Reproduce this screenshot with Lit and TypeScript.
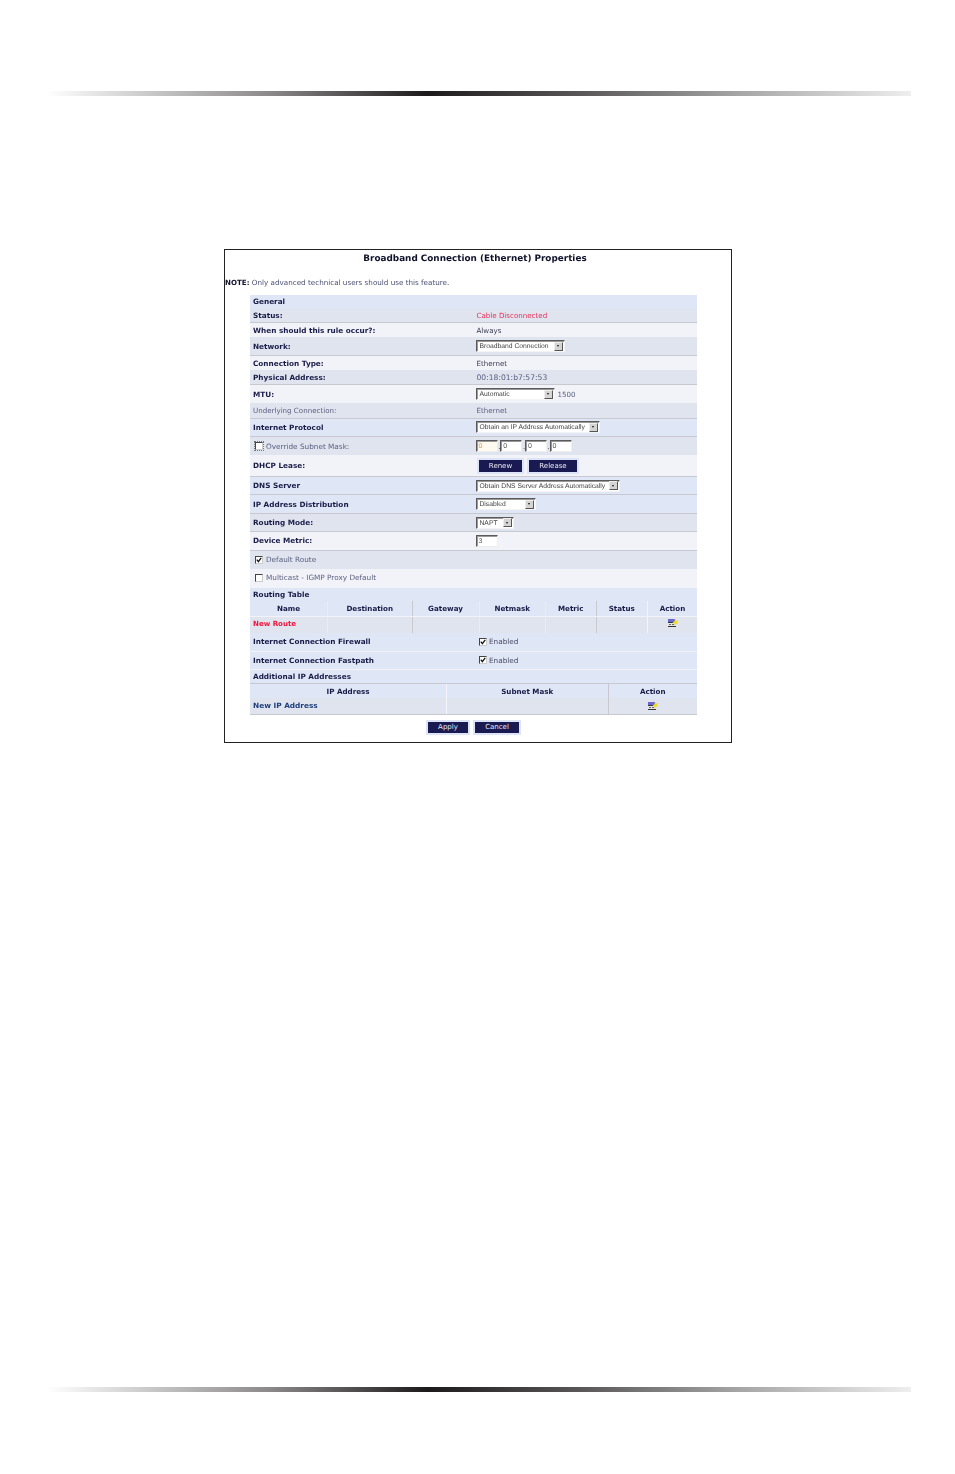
import { LitElement, html, css } from "lit";
import { customElement } from "lit/decorators.js";

const ICON = html`<svg class="icon" viewBox="0 0 10 8" width="10" height="8">
  <rect x="0" y="0" width="7" height="3" fill="#6a68d0"/>
  <rect x="0" y="3" width="8" height="1" fill="#333"/>
  <rect x="0" y="4" width="8" height="3" fill="#e4e5ec"/>
  <rect x="1" y="5" width="2" height="1" fill="#666"/>
  <rect x="4" y="5" width="2" height="1" fill="#666"/>
  <rect x="0" y="7" width="8" height="1" fill="#333"/>
  <path d="M7 0 L8 1.6 L10 1 L9 3 L10 5 L8 4.6 L7 7 L6.2 4.6 L4.5 3.4 L6.4 2.4 Z" fill="#f0df20"/>
</svg>`;

const sel = (text: string, cls: string) =>
  html`<span class="sel ${cls}"><span class="sel-t">${text}</span><span class="arrow"><i></i></span></span>`;
const cb = (checked: boolean, cls = "") => html`<span class="cb ${cls}">${checked
  ? html`<svg viewBox="0 0 6 6" width="6" height="6"><path d="M0.8 2.6 L2.4 4.6 L5.2 0.8" fill="none" stroke="#111" stroke-width="1.3"/></svg>`
  : ""}</span>`;

@customElement("app-root")
export class AppRoot extends LitElement {
  static styles = css`
    :host { display: block; width: 955px; height: 1474px; background: #fff; overflow: hidden;
      font-family: "DejaVu Sans", Verdana, sans-serif; font-size: 7.1px; color: #3c4058;
      text-rendering: geometricPrecision; }
    .page { display: flex; flex-direction: column; padding-top: 91px; }
    .bar { height: 5px; width: 864px; margin-left: 47px;
      background: linear-gradient(90deg, #fff 0%, #8a8888 26%, #1c1a1a 44%, #5a5858 62%, #a5a5a5 80%, #eeeeee 100%); }
    .box { width: 506px; height: 492px; margin: 153px 0 644px 224px; border: 1px solid #222; background: #fff; }
    .inner { filter: blur(0.25px); }
    .title { height: 19px; padding-top: 2px; box-sizing: border-box; width: 500px; text-align: center; font-weight: bold; font-size: 8.85px; line-height: 15px; color: #10122c; }
    .note { height: 25.5px; padding-top: 9px; box-sizing: border-box; line-height: 10px; font-size: 7.2px; color: #4a5070; white-space: nowrap; }
    .note b { color: #10122c; font-size: 7.1px; }
    .table { width: 447px; margin-left: 25px; }
    .row { display: grid; grid-template-columns: 226.5px 1fr; align-items: center; box-sizing: border-box; }
    .row > :first-child { padding-left: 3px; display: flex; align-items: center; }
    .l { font-weight: bold; color: #1a1c48; font-size: 7.3px; }
    .blue { background: #dfe6f5; }
    .gray { background: #e0e4ef; }
    .pale { background: #f2f3f8; }
    .line { border-bottom: 1px solid #c8c9d0; }
    .wline { border-bottom: 1px solid #f2f3f8; }
    .h13-5 { height: 13.5px; } .h14 { height: 14px; } .h14-5 { height: 14.5px; } .h15 { height: 15px; } .h15-5 { height: 15.5px; }
    .h16 { height: 16px; } .h16-5 { height: 16.5px; } .h18 { height: 18px; } .h18-5 { height: 18.5px; } .h19 { height: 19px; } .h22 { height: 22px; }
    .v { display: flex; align-items: center; white-space: nowrap; }
    .red { color: #e8305c; }
    .strong-red { color: #f0143c; font-weight: bold; font-size: 7.05px; }
    .navy { color: #1d3f7c; font-weight: bold; font-size: 7.35px; }
    .mut { color: #5c6080; }
    .dark { color: #3a3c50; }
    .enabled { color: #4a4c68; }
    .mono { font-size: 7.6px; }
    .sel { display: flex; align-items: center; justify-content: space-between; height: 12px; box-sizing: border-box; margin-left: -1px;
      border: 1px solid; border-color: #5a5a5a #f4f4f4 #f4f4f4 #5a5a5a; background: #fff; padding: 0 1px 0 3px;
      font-family: "Liberation Sans", Arial, sans-serif; font-size: 6.75px; color: #444; box-shadow: inset 1px 1px 0 #999; }
    .sel-t { white-space: nowrap; padding-top: 1px; }
    .arrow { width: 9px; height: 9px; flex: none; background: #d4d4d4; border: 1px solid; border-color: #eee #555 #555 #eee; box-sizing: border-box; display: flex; align-items: center; justify-content: center; }
    .arrow i { width: 0; height: 0; border: 1.5px solid transparent; border-top: 2px solid #111; border-bottom: 0; }
    .w88 { width: 89px; } .w78 { width: 79px; } .w123 { width: 124px; } .w143 { width: 144px; } .w59 { width: 60px; } .w37 { width: 38px; }
    .extra { margin-left: 3px; }
    .inp { width: 22px; height: 12px; box-sizing: border-box; border: 1px solid; border-color: #5a5a5a #eee #eee #5a5a5a; background: #fff; box-shadow: inset 1px 1px 0 #999; padding: 1px 0 0 2px;
      font-family: "Liberation Sans", Arial, sans-serif; font-size: 7px; line-height: 10px; color: #555; }
    .ips .inp:first-child, .v > .inp { margin-left: -1px; }
    .tint { color: #d8a040; background: #fffaf0; }
    .ips { display: flex; align-items: center; gap: 0; }
    .dot { width: 3.7px; text-align: center; color: #222; font-size: 7px; line-height: 12px; padding-top: 2px; box-sizing: border-box; }
    .cb { width: 6px; height: 6px; flex: none; background: #fff; border: 1px solid; border-color: #444 #ccc #ccc #444; margin-right: 2px; display: inline-flex; }
    .cb svg { display: block; }
    .focus { outline: 1px dotted #777; outline-offset: 0; }
    .cbl { padding-left: 5px !important; font-size: 7.3px; }
    .cbl .cb { margin-right: 3px; }
    .v.cbl { padding-left: 2.5px !important; }
    .v.cbl .cb { margin-right: 2px; }
    .btns { display: flex; gap: 7px; margin: 1px 0 0 2.5px; }
    .btn { height: 12px; background: #1a1a52; outline: 2px solid #dde4f7; color: #e8e8f4; font-size: 7px; display: flex; align-items: center; justify-content: center; }
    .w43 { width: 43px; } .w48 { width: 48px; } .w40 { width: 40px; } .w44 { width: 44px; }
    .sub { display: grid; align-items: center; box-sizing: border-box; }
    .routes { grid-template-columns: 78px 84.5px 67px 66.5px 50.5px 51.5px 1fr; }
    .addrs { grid-template-columns: 197px 161.5px 1fr; }
    .sub > div { height: 100%; display: flex; align-items: center; justify-content: center; box-sizing: border-box; }
    .sf { border-right: 1px solid #e8ecf6; }
    .ss { border-right: 1px solid #c8c9d0; }
    .sw { border-right: 1px solid #f4f5fa; }
    .sub.hd > div { font-weight: bold; color: #1a1c48; font-size: 7.15px; }
    .hdline { border-bottom: 1px solid #f2f3f8; }
    .first { justify-content: flex-start !important; padding-left: 3px; }
    .lift > div { padding-bottom: 2px; }
    .lift .icon { margin-bottom: 2px; }
    .foot { display: flex; gap: 7px; padding: 7px 0 0 203px; }
    .foot .btn { height: 11px; }
    .icon { display: block; }
    .top { display: flex; align-items: center; padding-left: 3px; box-sizing: border-box; }
  `;

  render() {
    return html`<div class="page">
      <div class="bar"></div>
      <div class="box"><div class="inner">
        <div class="title">Broadband Connection (Ethernet) Properties</div>
        <div class="note"><b>NOTE:</b> Only advanced technical users should use this feature.</div>
        <div class="table">
          <div class="top blue l h14">General</div>
          <div class="row gray line h14-5"><div class="l">Status:</div><div class="v red">Cable Disconnected</div></div>
          <div class="row pale h14"><div class="l">When should this rule occur?:</div><div class="v dark">Always</div></div>
          <div class="row gray line h19"><div class="l">Network:</div><div class="v">${sel("Broadband Connection", "w88")}</div></div>
          <div class="row pale h14"><div class="l">Connection Type:</div><div class="v dark">Ethernet</div></div>
          <div class="row gray line h15"><div class="l">Physical Address:</div><div class="v mut mono">00:18:01:b7:57:53</div></div>
          <div class="row pale h18"><div class="l">MTU:</div><div class="v">${sel("Automatic", "w78")}<span class="extra mut">1500</span></div></div>
          <div class="row gray line h15-5"><div class="mut">Underlying Connection:</div><div class="v mut">Ethernet</div></div>
          <div class="row blue line h18-5"><div class="l">Internet Protocol</div><div class="v">${sel("Obtain an IP Address Automatically", "w123")}</div></div>
          <div class="row gray h18"><div class="cbl mut">${cb(false, "focus")}Override Subnet Mask:</div><div class="v ips"><span class="inp tint">0</span><span class="dot">.</span><span class="inp">0</span><span class="dot">.</span><span class="inp">0</span><span class="dot">.</span><span class="inp">0</span></div></div>
          <div class="row pale line h22"><div class="l">DHCP Lease:</div><div class="v"><div class="btns"><span class="btn w43">Renew</span><span class="btn w48">Release</span></div></div></div>
          <div class="row blue line h18"><div class="l">DNS Server</div><div class="v">${sel("Obtain DNS Server Address Automatically", "w143")}</div></div>
          <div class="row blue line h19"><div class="l">IP Address Distribution</div><div class="v">${sel("Disabled", "w59")}</div></div>
          <div class="row gray line h18"><div class="l">Routing Mode:</div><div class="v">${sel("NAPT", "w37")}</div></div>
          <div class="row pale line h18-5"><div class="l">Device Metric:</div><div class="v"><span class="inp">3</span></div></div>
          <div class="row gray h18"><div class="cbl mut">${cb(true)}Default Route</div><div></div></div>
          <div class="row pale wline h19"><div class="cbl mut">${cb(false)}Multicast - IGMP Proxy Default</div><div></div></div>
          <div class="top blue l h13-5">Routing Table</div>
          <div class="sub routes hd blue hdline h16"><div class="sf">Name</div><div class="ss">Destination</div><div class="sf">Gateway</div><div class="sf">Netmask</div><div class="ss">Metric</div><div class="sw">Status</div><div>Action</div></div>
          <div class="sub routes gray lift h15-5"><div class="first strong-red sf">New Route</div><div class="ss"></div><div class="sf"></div><div class="sf"></div><div class="ss"></div><div class="sw"></div><div>${ICON}</div></div>
          <div class="row blue wline h19"><div class="l">Internet Connection Firewall</div><div class="v cbl">${cb(true)}<span class="enabled">Enabled</span></div></div>
          <div class="row blue wline h18"><div class="l">Internet Connection Fastpath</div><div class="v cbl">${cb(true)}<span class="enabled">Enabled</span></div></div>
          <div class="top blue l line h14-5">Additional IP Addresses</div>
          <div class="sub addrs hd blue h14"><div class="sw">IP Address</div><div class="ss">Subnet Mask</div><div>Action</div></div>
          <div class="sub addrs gray line h16-5"><div class="first navy sw">New IP Address</div><div class="ss"></div><div>${ICON}</div></div>
        </div>
        <div class="foot"><span class="btn w40">Apply</span><span class="btn w44">Cancel</span></div>
      </div></div>
      <div class="bar"></div>
    </div>`;
  }
}
